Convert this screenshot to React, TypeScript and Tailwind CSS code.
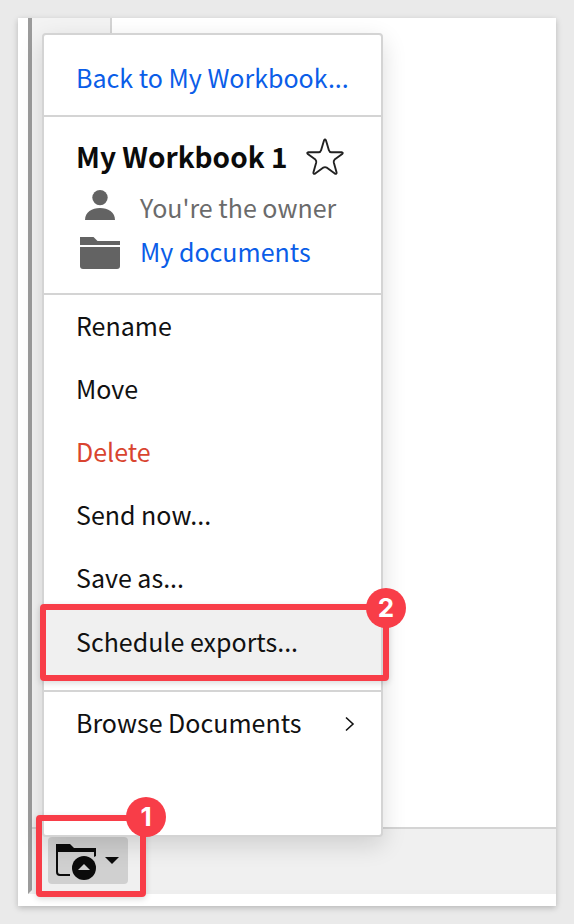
import type { ReactNode } from "react";

const fontStack = "font-['Noto_Sans_CJK_SC',sans-serif]";

function Callout({
  step,
  className,
  badgeClassName,
}: {
  step: number;
  className: string;
  badgeClassName: string;
}) {
  return (
    <div
      className={`pointer-events-none absolute rounded-[4px] border-[6px] border-[#f83d48] shadow-[0_2px_6px_rgba(0,0,0,0.15)] ${className}`}
    >
      <span
        className={`absolute flex size-10 items-center justify-center rounded-full bg-[#f83d48] font-['Inter',sans-serif] text-[26px] font-bold leading-none text-white ${badgeClassName}`}
      >
        {step}
      </span>
    </div>
  );
}

function MenuItem({
  children,
  className = "text-[#111111]",
}: {
  children: ReactNode;
  className?: string;
}) {
  return (
    <li>
      <button
        type="button"
        className={`flex h-[63px] w-full items-center px-8 pb-1 text-left ${className}`}
      >
        {children}
      </button>
    </li>
  );
}

function StarIcon() {
  return (
    <svg viewBox="0 0 38 38" className="size-[38px]" fill="none" stroke="#222222" strokeWidth="1.9" strokeLinejoin="round" aria-hidden="true">
      <path d="M18 2.4Q19 .6 20 2.4L22.9 12.2Q23.5 14.2 25.4 14.2H35.6Q37.6 14.4 36.2 16L28.6 21.6Q27.4 22.8 27.8 24.4L30.6 34.4Q30.8 36.6 28.8 35.6L20.6 29.6Q19 28.6 17.4 29.6L9.2 35.6Q7.2 36.6 7.4 34.4L10.2 24.4Q10.6 22.8 9.4 21.6L1.8 16Q.4 14.4 2.4 14.2H12.6Q14.5 14.2 15.1 12.2Z" />
    </svg>
  );
}

function PersonIcon() {
  return (
    <svg viewBox="0 0 40 40" className="size-10" fill="#636363" aria-hidden="true">
      <circle cx="20" cy="8.6" r="7.7" />
      <path d="M5 31C5 23 12 19 20 19S35 23 35 31Z" />
    </svg>
  );
}

function FolderIcon() {
  return (
    <svg viewBox="0 0 40 32" className="h-8 w-10" fill="#636363" aria-hidden="true">
      <path d="M0 0H13.5L17.5 4H40V8H0Z" />
      <path d="M0 10H40V29Q40 32 37 32H3Q0 32 0 29Z" />
    </svg>
  );
}

function FolderUpIcon() {
  return (
    <svg viewBox="0 0 40 36" className="h-9 w-10" aria-hidden="true">
      <path d="M0 0H14L18 4H40V12L38 13V8H2V28Q2 30 4 30H14V32H4Q0 32 0 28Z" fill="#0b0b0b" />
      <circle cx="28" cy="24" r="12" fill="#0b0b0b" />
      <path d="M22 26L28 20L34 26Z" fill="#d0d0d0" />
    </svg>
  );
}

function FileMenu() {
  return (
    <nav
      aria-label="File menu"
      className="absolute -left-1.5 bottom-full flex h-[804px] w-[341px] flex-col rounded-[4px] border-2 border-[#d4d4d4] bg-white text-[25px] leading-9 shadow-[0_8px_24px_rgba(0,0,0,0.14)]"
    >
      <a href="#workbook" className="flex h-20 items-center px-8 pt-1 text-[#0b5de8]">
        Back to My Workbook...
      </a>

      <section className="border-y-2 border-[#d4d4d4] px-8 pb-[18px] pt-3.5">
        <div className="mb-1 flex h-[52px] items-center gap-[19px]">
          <h1 className="pb-0.5 text-[28px] font-bold text-[#0b0b0b]">My Workbook 1</h1>
          <button type="button" aria-label="Add to favorites">
            <StarIcon />
          </button>
        </div>
        <p className="flex h-11 items-center gap-5 pl-1 text-[#6b6b6b]">
          <PersonIcon />
          <span className="pb-1">You're the owner</span>
        </p>
        <a href="#documents" className="flex h-11 items-center gap-5 pl-1 text-[#0b5de8]">
          <FolderIcon />
          <span className="pb-1">My documents</span>
        </a>
      </section>

      <ul>
        <MenuItem>Rename</MenuItem>
        <MenuItem>Move</MenuItem>
        <MenuItem className="text-[#d9442f]">Delete</MenuItem>
        <MenuItem>Send now...</MenuItem>
        <MenuItem>Save as...</MenuItem>
        <li className="relative">
          <button
            type="button"
            className="flex h-[65px] w-full items-center bg-[#f0f0f0] px-8 pb-1 text-left text-[#111111]"
          >
            Schedule exports...
          </button>
          <Callout
            step={2}
            className="-bottom-1.5 -left-1 -right-2 -top-1.5"
            badgeClassName="-right-[23px] -top-[22px]"
          />
        </li>
      </ul>

      <div className="mt-[15px] border-t-2 border-[#d4d4d4]">
        <button
          type="button"
          className="flex h-[63px] w-full items-center justify-between pl-8 pr-[26px] text-left text-[#111111]"
        >
          <span className="pb-1">Browse Documents</span>
          <svg viewBox="0 0 10 16" className="h-4 w-2.5" fill="none" stroke="#111111" strokeWidth="1.6" aria-hidden="true">
            <path d="M1 1.5L8 8L1 14.5" />
          </svg>
        </button>
      </div>
    </nav>
  );
}

export default function App() {
  return (
    <div className={`flex min-h-screen bg-[#eaeaea] p-[18px] ${fontStack}`}>
      <div className="flex flex-1 flex-col bg-white pb-3 pl-2.5 shadow-[0_2px_6px_rgba(0,0,0,0.22)]">
        <div className="flex flex-1 flex-col border-b-4 border-l-4 border-b-[#eeeeee] border-l-[#9b9b9b]">
          <div className="flex flex-1">
            <aside className="w-20 border-r-2 border-[#d4d4d4] bg-[#f3f3f3]" />
            <main className="flex-1 bg-white" />
          </div>
          <footer className="flex border-t-2 border-[#d4d4d4] bg-[#f0f0f0] px-4 pb-1.5 pt-2">
            <div className="relative">
              <FileMenu />
              <button
                type="button"
                aria-label="Open file menu"
                className="flex h-[47px] w-20 items-center gap-[9px] rounded-[4px] bg-[#d0d0d0] pl-2 pt-[3px]"
              >
                <FolderUpIcon />
                <svg viewBox="0 0 14 7" className="-mt-1 h-[7px] w-3.5" fill="#0b0b0b" aria-hidden="true">
                  <path d="M0 0H14L7 7Z" />
                </svg>
              </button>
              <Callout
                step={1}
                className="-bottom-[13px] -left-3 -right-[18px] -top-[22px]"
                badgeClassName="-right-[26px] -top-6"
              />
            </div>
          </footer>
        </div>
      </div>
    </div>
  );
}
